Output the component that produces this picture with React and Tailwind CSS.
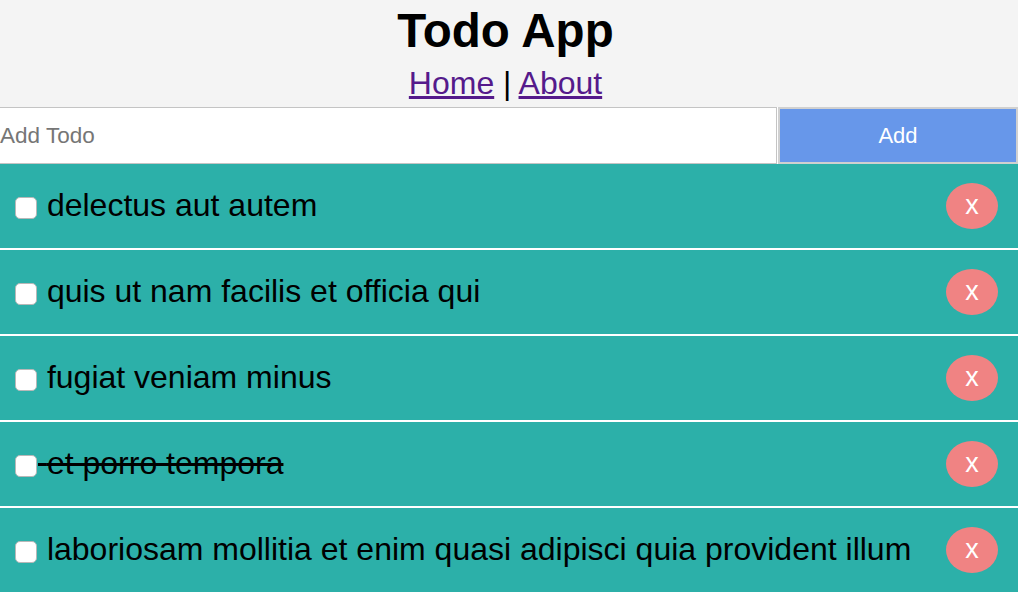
import React from "react";

const todos = [
  { id: 1, title: "delectus aut autem", completed: false },
  { id: 2, title: "quis ut nam facilis et officia qui", completed: false },
  { id: 3, title: "fugiat veniam minus", completed: false },
  { id: 4, title: "et porro tempora", completed: true },
  { id: 5, title: "laboriosam mollitia et enim quasi adipisci quia provident illum", completed: false },
];

export default function App() {
  return (
    <div className="w-[1018px] h-[592px] overflow-hidden bg-white" style={{ fontFamily: '"Liberation Sans", Arial, sans-serif' }}>
      <header className="h-[107px] bg-[#f4f4f4] text-center pr-[7px]">
        <h1 className="pt-[4px] text-[47.5px] leading-[53px] font-bold text-black">Todo App</h1>
        <div className="mt-[8px] text-[32px] leading-[36px] text-black">
          <a href="#" className="text-[#551a8b] underline">Home</a>
          {" | "}
          <a href="#" className="text-[#551a8b] underline">About</a>
        </div>
      </header>
      <form className="flex h-[57px]" onSubmit={(e) => e.preventDefault()}>
        <input
          type="text"
          placeholder="Add Todo"
          className="w-[777px] h-full bg-white border-y border-r border-[#c4c4c4] pl-0 text-[22.5px] outline-none placeholder:text-[#767676]"
        />
        <button type="submit" className="flex-1 ml-[1px] h-full bg-[#6797ea] border-2 border-[#d0d0d0] text-white text-[22px]">
          Add
        </button>
      </form>
      {todos.map((t) => (
        <div key={t.id} className="h-[86px] bg-[#2cb0a9] border-b-2 border-white flex items-center justify-between pl-[15px] pr-[20px]">
          <p className={"text-[32px] text-black pb-[2px] " + (t.completed ? "line-through" : "")}>
            <input
              type="checkbox"
              className="appearance-none inline-block w-[22px] h-[22px] bg-white rounded-[5px] border border-[#b8b8b8] align-[-3px] mr-[1px]"
            />
            {" "}
            {t.title}
          </p>
          <button className="w-[52px] h-[46px] rounded-[50%] bg-[#f08383] text-white text-[27px] leading-none flex items-center justify-center pb-[2px]">
            x
          </button>
        </div>
      ))}
    </div>
  );
}
